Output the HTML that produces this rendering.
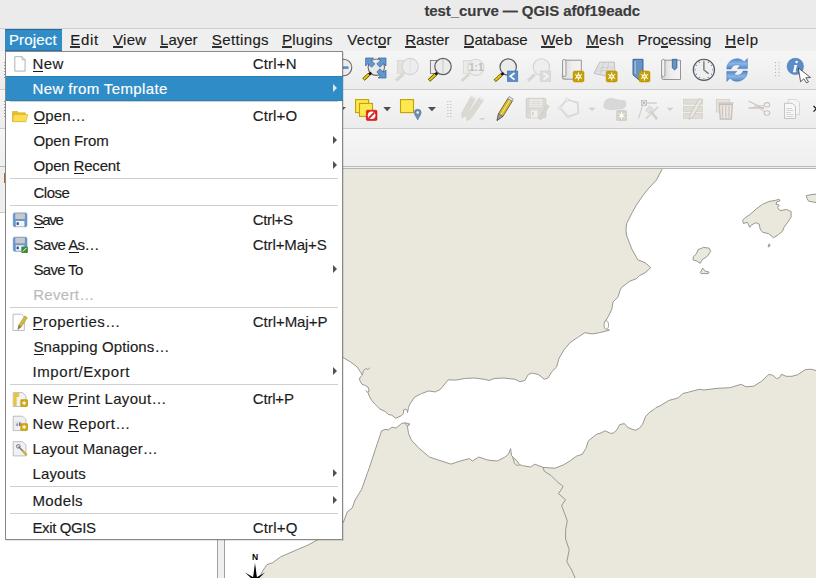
<!DOCTYPE html><html><head><meta charset="utf-8"><style>
*{margin:0;padding:0;box-sizing:border-box}
html,body{width:816px;height:578px;overflow:hidden;background:#efefef;font-family:"Liberation Sans",sans-serif;position:relative}
div,span,svg{position:absolute}
.tx{-webkit-text-stroke:0.15px currentColor;white-space:nowrap;font-size:15px;line-height:15px;color:#1c1c1c}
</style></head><body><div style="left:0px;top:0px;width:816px;height:28px;background:#ebebeb;"></div>
<div style="left:0px;top:28px;width:816px;height:1px;background:#cfcfcf;"></div>
<div style="left:0px;top:29px;width:816px;height:22px;background:#efefef;"></div>
<div style="left:5px;top:29px;width:57px;height:22px;background:#308cc6;border-top:1px solid #2769a0;border-bottom:1px solid #2a72a8"></div>
<div style="left:0px;top:51px;width:816px;height:38px;background:linear-gradient(#f6f6f6,#ececec);"></div>
<div style="left:0px;top:89px;width:816px;height:1px;background:#cdcdcd;"></div>
<div style="left:0px;top:90px;width:816px;height:38px;background:linear-gradient(#f6f6f6,#ececec);"></div>
<div style="left:0px;top:128px;width:816px;height:1px;background:#cdcdcd;"></div>
<div style="left:0px;top:129px;width:816px;height:37px;background:linear-gradient(#f6f6f6,#efefef);"></div>
<div style="left:0px;top:166px;width:816px;height:1px;background:#b9b9b9;"></div>
<div style="left:0px;top:167px;width:816px;height:1px;background:#f0f0f0;"></div>
<div style="left:225px;top:168px;width:591px;height:1px;background:#b5b5b5;"></div>
<svg style="left:0;top:0" width="816" height="168" viewBox="0 0 816 168">
<defs>
 <linearGradient id="gpaper" x1="0" x2="1"><stop offset="0" stop-color="#d4d4d4"/><stop offset="0.5" stop-color="#eeeeee"/><stop offset="1" stop-color="#f4f4f4"/></linearGradient>
 <linearGradient id="gblue" x1="0" x2="1"><stop offset="0" stop-color="#8fb4dd"/><stop offset="1" stop-color="#5f8fc8"/></linearGradient>
 <g id="badge"><rect x="0" y="0" width="11" height="11" rx="1.8" fill="#c6a000" stroke="#b08f00" stroke-width="0.5"/><g stroke="#fff" stroke-width="1"><line x1="5.5" y1="1.4" x2="5.5" y2="9.6"/><line x1="1.9" y1="3.4" x2="9.1" y2="7.6"/><line x1="1.9" y1="7.6" x2="9.1" y2="3.4"/></g><circle cx="5.5" cy="5.5" r="2.3" fill="#fff"/><circle cx="5.5" cy="5.5" r="1.1" fill="#d8b420"/></g>
</defs>
<!-- left strip details -->
<g fill="#9a9a9a"><rect x="4" y="62" width="1" height="1"/><rect x="4" y="65" width="1" height="1"/><rect x="4" y="68" width="1" height="1"/><rect x="4" y="71" width="1" height="1"/><rect x="4" y="74" width="1" height="1"/><rect x="4" y="77" width="1" height="1"/><rect x="4" y="101" width="1" height="1"/><rect x="4" y="104" width="1" height="1"/><rect x="4" y="107" width="1" height="1"/><rect x="4" y="110" width="1" height="1"/><rect x="4" y="113" width="1" height="1"/><rect x="4" y="116" width="1" height="1"/></g>

<!-- ===== toolbar 1 ===== -->
<!-- zoom out (partial) -->
<circle cx="343.5" cy="67.5" r="8.3" fill="#ececec" stroke="#6a6a6a" stroke-width="1.1"/>
<rect x="338" y="66.3" width="10.5" height="2.6" fill="#5a8cc4"/>
<!-- zoom full -->
<g>
 <circle cx="376.3" cy="67.2" r="8.2" fill="#e9e9e9" stroke="#6a6a6a" stroke-width="1.1"/>
 <line x1="363.5" y1="79.5" x2="369.5" y2="73.8" stroke="#3b3b00" stroke-width="3.2"/>
 <line x1="363.8" y1="79.2" x2="369" y2="74.3" stroke="#f2c800" stroke-width="2"/>
 <circle cx="370.2" cy="73.4" r="1.5" fill="#111"/>
 <path d="M0,0 H8 L5.6,2.4 L9.2,6 L6,9.2 L2.4,5.6 L0,8 Z" transform="translate(365.6,58)" fill="#6597cf" stroke="#34649c" stroke-width="0.7" stroke-linejoin="round"/>
 <path d="M0,0 H8 L5.6,2.4 L9.2,6 L6,9.2 L2.4,5.6 L0,8 Z" transform="translate(386,58) scale(-1,1)" fill="#6597cf" stroke="#34649c" stroke-width="0.7" stroke-linejoin="round"/>
 <path d="M0,0 H8 L5.6,2.4 L9.2,6 L6,9.2 L2.4,5.6 L0,8 Z" transform="translate(386,78) scale(-1,-1)" fill="#6597cf" stroke="#34649c" stroke-width="0.7" stroke-linejoin="round"/>
</g>
<!-- zoom to selection (disabled) -->
<g opacity="1">
 <rect x="397.3" y="60.5" width="8" height="13" fill="#e4e2dc" stroke="#d8d6d0" stroke-width="0.8"/>
 <line x1="396" y1="80.5" x2="403.5" y2="74" stroke="#d6d6d2" stroke-width="3"/>
 <circle cx="410.2" cy="66.5" r="8.1" fill="#ededed" stroke="#d4d4d4" stroke-width="1.1"/>
 <line x1="410.2" y1="59" x2="410.2" y2="74" stroke="#e0e0e0" stroke-width="1"/>
</g>
<!-- zoom to layer -->
<g>
 <rect x="430.4" y="60.5" width="8" height="13" fill="#ececec" stroke="#7a7a7a" stroke-width="0.9"/>
 <line x1="429" y1="80.5" x2="436" y2="74" stroke="#3b3b00" stroke-width="3.2"/>
 <line x1="429.3" y1="80.2" x2="435.5" y2="74.5" stroke="#f2c800" stroke-width="2"/>
 <circle cx="436.5" cy="73.4" r="1.5" fill="#111"/>
 <circle cx="443" cy="66.5" r="8.2" fill="#ebebeb" stroke="#5e5e5e" stroke-width="1.2"/>
 <line x1="443" y1="59" x2="443" y2="74" stroke="#c9c9c9" stroke-width="1"/>
</g>
<!-- zoom native 1:1 (disabled) -->
<g>
 <rect x="463.3" y="60.5" width="8" height="13" fill="#eceae4" stroke="#d8d6d0" stroke-width="0.8"/>
 <line x1="461.5" y1="81" x2="469" y2="74.3" stroke="#d6d6d2" stroke-width="3"/>
 <circle cx="475.8" cy="67.3" r="8.1" fill="#eeeeee" stroke="#d4d4d4" stroke-width="1.1"/>
 <text x="476.3" y="71.2" font-family="Liberation Sans" font-weight="bold" font-size="10" text-anchor="middle" fill="#bcbcbc">1:1</text>
</g>
<!-- zoom last -->
<g>
 <circle cx="508.2" cy="67" r="8.2" fill="#ebebeb" stroke="#5e5e5e" stroke-width="1.2"/>
 <line x1="494.8" y1="80.8" x2="501.8" y2="74.3" stroke="#3b3b00" stroke-width="3.2"/>
 <line x1="495.1" y1="80.5" x2="501.3" y2="74.8" stroke="#f2c800" stroke-width="2"/>
 <circle cx="502.5" cy="73.8" r="1.5" fill="#111"/>
 <rect x="507.3" y="71" width="10.5" height="10.5" fill="#5b8dc6" stroke="#3f6ea8" stroke-width="0.6"/>
 <path d="M514.5,73 l-4.3,3.3 l4.3,3.3" fill="none" stroke="#fff" stroke-width="1.7"/>
</g>
<!-- zoom next (disabled) -->
<g>
 <circle cx="541.4" cy="67" r="8.2" fill="#eeeeee" stroke="#d2d2d2" stroke-width="1.1"/>
 <line x1="527.8" y1="80.8" x2="535" y2="74.3" stroke="#d6d6d2" stroke-width="3"/>
 <rect x="540.2" y="71" width="10.5" height="10.5" fill="#dcdcdc" stroke="#d0d0d0" stroke-width="0.6"/>
 <path d="M543.5,73 l4.3,3.3 l-4.3,3.3" fill="none" stroke="#f5f5f5" stroke-width="1.7"/>
</g>
<!-- new spatial bookmark (scroll + badge) -->
<g>
 <path d="M563,60.2 h18.3 v19 h-17.2 a1.8,1.8 0 0 1 -1.8,-1.8 z" fill="url(#gpaper)" stroke="#8a8a8a" stroke-width="0.9"/>
 <rect x="562.6" y="59.5" width="3.3" height="17" rx="1.5" fill="#f2f2f2" stroke="#8a8a8a" stroke-width="0.8"/>
 <use href="#badge" x="573" y="71"/>
</g>
<!-- 3D map (grid + badge) -->
<g>
 <path d="M594,73.4 L599.7,62.1 L614.3,62.1 L615,73 L606,76 Z" fill="#e2e2e2" stroke="#b5b5b5" stroke-width="0.8"/>
 <g stroke="#c4c4c4" stroke-width="0.6" fill="none"><path d="M597,68 L614,67"/><path d="M604,62 L600,74"/><path d="M609,62 L606,75"/><path d="M596,71 L614,70"/></g>
 <use href="#badge" x="606.2" y="71"/>
</g>
<!-- bookmark blue + badge -->
<g>
 <path d="M633,59.3 h10 v20.6 l-4,0 l-6,-5 z" fill="#6693c8" stroke="#345a8a" stroke-width="0.9"/>
 <rect x="634.5" y="61" width="1.2" height="13" fill="#a9c6e8"/>
 <use href="#badge" x="639" y="71"/>
</g>
<!-- show bookmarks (scroll with blue tab) -->
<g>
 <path d="M662,60.2 h18.5 v19.3 h-17 a1.8,1.8 0 0 1 -1.8,-1.8 z" fill="url(#gpaper)" stroke="#8a8a8a" stroke-width="0.9"/>
 <rect x="661.6" y="59.5" width="3.3" height="17" rx="1.5" fill="#f2f2f2" stroke="#8a8a8a" stroke-width="0.8"/>
 <path d="M672.3,59.3 h4.6 v8.6 l-2.3,2 l-2.3,-2 z" fill="#6693c8" stroke="#345a8a" stroke-width="0.8"/>
</g>
<!-- clock -->
<g>
 <circle cx="703.9" cy="69.8" r="10.6" fill="#efefef" stroke="#555555" stroke-width="1.15"/>
 <g fill="#5b8fd6">
  <circle cx="703.9" cy="61" r="0.7"/><circle cx="708.3" cy="62.2" r="0.7"/><circle cx="711.5" cy="65.4" r="0.7"/><circle cx="712.7" cy="69.8" r="0.7"/><circle cx="711.5" cy="74.2" r="0.7"/><circle cx="708.3" cy="77.4" r="0.7"/><circle cx="703.9" cy="78.6" r="0.7"/><circle cx="699.5" cy="77.4" r="0.7"/><circle cx="696.3" cy="74.2" r="0.7"/><circle cx="695.1" cy="69.8" r="0.7"/><circle cx="696.3" cy="65.4" r="0.7"/><circle cx="699.5" cy="62.2" r="0.7"/>
 </g>
 <path d="M703.9,61.8 V70 L708.6,73.6" fill="none" stroke="#777" stroke-width="1.4"/>
</g>
<!-- refresh -->
<defs><linearGradient id="grf" x1="0" y1="0" x2="0" y2="1"><stop offset="0" stop-color="#4f88c9"/><stop offset="0.5" stop-color="#8db6e6"/><stop offset="1" stop-color="#4a82c4"/></linearGradient></defs>
<g fill="url(#grf)" stroke="#3f74b4" stroke-width="0.5">
 <path d="M726.8,69 A10.2,10.2 0 0 1 744.2,61.8 L747.4,58.6 V68.6 H737.4 L740.3,65.7 A6.2,6.2 0 0 0 731,69 Z"/>
 <path d="M726.8,69 A10.2,10.2 0 0 1 744.2,61.8 L747.4,58.6 V68.6 H737.4 L740.3,65.7 A6.2,6.2 0 0 0 731,69 Z" transform="rotate(180 737.1 70)"/>
</g>
<!-- handle dots tb1 -->
<g fill="#a9a9a9">
 <rect x="775" y="62" width="1" height="1"/><rect x="778.5" y="62" width="1" height="1"/>
 <rect x="775" y="65.3" width="1" height="1"/><rect x="778.5" y="65.3" width="1" height="1"/>
 <rect x="775" y="68.6" width="1" height="1"/><rect x="778.5" y="68.6" width="1" height="1"/>
 <rect x="775" y="71.9" width="1" height="1"/><rect x="778.5" y="71.9" width="1" height="1"/>
 <rect x="775" y="75.2" width="1" height="1"/><rect x="778.5" y="75.2" width="1" height="1"/>
</g>
<!-- identify -->
<g>
 <circle cx="795.3" cy="66.4" r="8.2" fill="#5b8cc8" stroke="#4a78b0" stroke-width="0.6"/>
 <circle cx="796.6" cy="62" r="1.2" fill="#fff"/>
 <path d="M794.5,65 h2.6 l-1.6,6.3 h1 l-0.3,1 h-3.3 l1.5,-6.3 h-0.8 z" fill="#fff"/>
 <path d="M798.3,68 L810.5,77.5 L805.8,77.8 L808.5,81.8 L806.5,82.8 L803.8,78.8 L800.6,81.7 Z" fill="#fff" stroke="#333" stroke-width="0.8" stroke-linejoin="round"/>
</g>

<!-- ===== toolbar 2 ===== -->
<!-- partial arrow left -->
<path d="M338,107 h8 l-4,4 z" fill="#555"/>
<!-- deselect -->
<g>
 <rect x="355.6" y="99.6" width="13" height="13" fill="#fce94f" stroke="#c4a000" stroke-width="1.1"/>
 <rect x="359.5" y="103.4" width="13" height="13" fill="#fce94f" stroke="#c4a000" stroke-width="1.1"/>
 <rect x="366.3" y="110.2" width="10.7" height="10.3" rx="1.2" fill="#dd2222" stroke="#cc0000" stroke-width="0.5"/>
 <circle cx="371.6" cy="115.3" r="3.8" fill="#fff"/>
 <line x1="369" y1="118" x2="374.3" y2="112.6" stroke="#dd2222" stroke-width="1.8"/>
</g>
<path d="M383.3,107 h7.7 l-3.85,4.2 z" fill="#4e4e4e"/>
<!-- select by location -->
<g>
 <rect x="400.5" y="99.6" width="13" height="13" fill="#fce94f" stroke="#c4a000" stroke-width="1.1"/>
 <path d="M417.7,109.2 a3.4,3.4 0 0 1 3.4,3.4 c0,2.2 -2.2,4.5 -3.4,7.3 c-1.2,-2.8 -3.4,-5.1 -3.4,-7.3 a3.4,3.4 0 0 1 3.4,-3.4 z" fill="#6a8db0" stroke="#4f7397" stroke-width="0.6"/>
 <circle cx="417.7" cy="112.5" r="1.2" fill="#fff"/>
</g>
<path d="M427.9,107 h8.1 l-4.05,4.3 z" fill="#4e4e4e"/>
<!-- handle dots tb2 -->
<g fill="#acacac">
 <rect x="447.4" y="101" width="1" height="1"/><rect x="450.3" y="101" width="1" height="1"/>
 <rect x="447.4" y="104" width="1" height="1"/><rect x="450.3" y="104" width="1" height="1"/>
 <rect x="447.4" y="107" width="1" height="1"/><rect x="450.3" y="107" width="1" height="1"/>
 <rect x="447.4" y="110" width="1" height="1"/><rect x="450.3" y="110" width="1" height="1"/>
 <rect x="447.4" y="113" width="1" height="1"/><rect x="450.3" y="113" width="1" height="1"/>
 <rect x="447.4" y="116" width="1" height="1"/><rect x="450.3" y="116" width="1" height="1"/>
</g>
<!-- current edits (disabled pencils) -->
<path d="M462,118 L466.1,115.7 L475.2,99.2 L470.8,96.8 L461.7,113.3 Z" fill="#dcd9d3" stroke="#d2cfca" stroke-width="0.6"/>
<path d="M466.5,120.5 L470.9,118.6 L483.1,100.9 L478.9,98.1 L466.7,115.8 Z" fill="#dcd9d3" stroke="#d2cfca" stroke-width="0.6"/>
<path d="M470.8,96.8 L475.2,99.2 L476,97.8 L471.6,95.4 Z M478.9,98.1 L483.1,100.9 L484,99.5 L479.8,96.7 Z" fill="#f2f2f2" stroke="#d6d6d6" stroke-width="0.5"/>
<path d="M479.3,118 h5.7 l-2.85,2.7 z" fill="#d2d2d2"/>
<!-- toggle editing pencil -->
<g>
 <path d="M497,120.5 L498.6,113.5 L507.8,98.5 L512.2,101.3 L503,116.3 Z" fill="#d9bc2a" stroke="#5a5030" stroke-width="0.8" stroke-linejoin="round"/>
 <path d="M497,120.5 L498.6,113.5 L503,116.3 Z" fill="#9a9a9a" stroke="#4a4a4a" stroke-width="0.6"/>
 <path d="M507.8,98.5 L509.2,96.5 L513.3,99.2 L512.2,101.3 Z" fill="#e6e6e6" stroke="#666" stroke-width="0.6"/>
 <line x1="500.8" y1="114.8" x2="510" y2="99.9" stroke="#f3e48a" stroke-width="1"/>
</g>
<!-- save edits (disabled) -->
<g>
 <rect x="526.3" y="98.3" width="19.5" height="19.5" rx="1.5" fill="#dcdad6" stroke="#cdcbc7" stroke-width="0.9"/>
 <rect x="530" y="99.3" width="12" height="7.5" fill="#eeeeea"/>
 <g stroke="#d0cecb" stroke-width="0.7"><line x1="531" y1="101.3" x2="541" y2="101.3"/><line x1="531" y1="103.3" x2="541" y2="103.3"/><line x1="531" y1="105.3" x2="541" y2="105.3"/></g>
 <rect x="531" y="110.5" width="6.5" height="7" fill="#f0f0ee"/><rect x="532.3" y="112" width="1.2" height="3.5" fill="#c8c8c8"/>
 <line x1="539.5" y1="119.5" x2="548" y2="105" stroke="#d8d2cc" stroke-width="3.8"/>
</g>
<!-- add polygon (disabled) -->
<path d="M567,99.6 L577.8,102.8 L578.3,113.1 L568,117 L559.9,107.7 Z" fill="none" stroke="#dadada" stroke-width="2" stroke-linejoin="round"/><g fill="#f2f2f2" stroke="#d0d0d0" stroke-width="0.7"><circle cx="567" cy="99.6" r="1.6"/><circle cx="559.9" cy="107.7" r="1.6"/><circle cx="568" cy="117" r="1.3"/></g>
<path d="M588.6,107.7 h6.9 l-3.45,3.4 z" fill="#d0d0d0"/>
<!-- digitize shape (disabled) -->
<g>
 <path d="M606,100 c4,-3 9,-1 12,0 c4,1 8,-1 8,4 c0,4 -3,5 -6,5 c-3,0 -6,1 -10,0.5 c-4,-0.5 -7,-1 -6,-5 c0.3,-2 1,-3.5 2,-4.5 z" fill="#d8d8d8" stroke="#d0d0d0" stroke-width="0.6"/>
 <rect x="616.2" y="110.1" width="10.8" height="10.8" rx="1.5" fill="#d4d0c6"/>
 <g stroke="#fff" stroke-width="1"><line x1="621.6" y1="111.8" x2="621.6" y2="119.2"/><line x1="618.5" y1="113.6" x2="624.7" y2="117.4"/><line x1="618.5" y1="117.4" x2="624.7" y2="113.6"/></g>
 <circle cx="621.6" cy="115.5" r="1.6" fill="#fff"/>
</g>
<!-- vertex tool (disabled) -->
<g>
 <rect x="641" y="100" width="6" height="5.8" fill="#bdbdbd"/>
 <circle cx="644" cy="102.9" r="1.9" fill="none" stroke="#f2f2f2" stroke-width="0.9"/>
 <line x1="647" y1="103" x2="656.8" y2="103" stroke="#cdcdcd" stroke-width="1.4"/>
 <line x1="642.3" y1="106" x2="638.5" y2="118.5" stroke="#c4c4c4" stroke-width="0.9"/>
 <line x1="645.8" y1="118.8" x2="658.3" y2="106.6" stroke="#d9d6d0" stroke-width="1.8"/>
 <line x1="649.5" y1="109.5" x2="657" y2="119.2" stroke="#d3cfc8" stroke-width="2.4"/>
 <path d="M645.5,110.5 L649.6,105.8 L653.3,108.8 L649.4,113.3 Z" fill="#e2e0dc" stroke="#cfccc6" stroke-width="0.6"/>
</g>
<path d="M666.7,107.7 h6.8 l-3.4,3.3 z" fill="#d0d0d0"/>
<!-- modify attributes (disabled) -->
<g fill="#e0ded4" stroke="#d2d0c7" stroke-width="0.8">
 <rect x="683.4" y="99.2" width="19" height="5"/>
 <rect x="683.4" y="106.4" width="19" height="5"/>
 <rect x="683.4" y="113.3" width="19" height="5"/>
</g>
<path d="M689.3,119.5 L690,114.5 L699.3,98.6 L702.6,100.5 L693.3,116.4 Z" fill="#e9e7e3" stroke="#c9c5c0" stroke-width="0.9" stroke-linejoin="round"/>
<!-- delete selected (disabled) -->
<g>
 <rect x="716.3" y="99.5" width="13.3" height="12.5" fill="#e6e3dc" stroke="#d2cfc8" stroke-width="0.8"/>
 <rect x="718" y="102.2" width="15.5" height="1.6" fill="#d2ccc8"/>
 <path d="M719.3,104.5 h13 l-1,14.5 h-11 z" fill="#ebe8e4" stroke="#c7bdb9" stroke-width="1.3"/>
 <g stroke="#cdc4c0" stroke-width="1.2"><line x1="722.5" y1="106" x2="722.5" y2="117.5"/><line x1="725.8" y1="106" x2="725.8" y2="117.5"/><line x1="729" y1="106" x2="729" y2="117.5"/></g>
</g>
<!-- cut (disabled) -->
<g fill="none" stroke="#cbc3c0">
 <path d="M748.6,101 L764,108.8" stroke-width="1.2"/>
 <path d="M748.6,108 L764,107.8" stroke-width="1.6"/>
 <ellipse cx="767" cy="104.8" rx="2.8" ry="2.2" stroke-width="1.1"/>
 <ellipse cx="767" cy="113" rx="2.8" ry="2.2" stroke-width="1.1"/>
 <path d="M754,106 L764.6,105.8 M757,106.5 L764.4,111.5" stroke-width="0.9"/>
</g>
<!-- copy (disabled) -->
<g>
 <path d="M788.3,99.5 h8 l3.2,3.2 v12 h-11.2 z" fill="#f5f5f5" stroke="#d0d0d0" stroke-width="0.8"/>
 <path d="M784.5,103.3 h7.8 l3.2,3.2 v12 h-11 z" fill="#f8f8f8" stroke="#bdbdbd" stroke-width="0.9"/>
 <g stroke="#c5c5c5" stroke-width="0.7"><line x1="786.3" y1="108.5" x2="792" y2="108.5"/><line x1="786.3" y1="110.5" x2="793.5" y2="110.5"/><line x1="786.3" y1="112.5" x2="791" y2="112.5"/><line x1="786.3" y1="114.5" x2="793.5" y2="114.5"/><line x1="786.3" y1="116.5" x2="793.5" y2="116.5"/></g>
</g>
<!-- extension chevron -->
<path d="M813.5,106 l2.8,2.8 l-2.8,2.8" fill="none" stroke="#222" stroke-width="1.3"/>
</svg>

<div style="left:0px;top:167px;width:218px;height:46px;background:#eeeeee;"></div>
<div style="left:0px;top:212px;width:218px;height:1px;background:#c8c8c8;"></div>
<div style="left:0px;top:213px;width:217px;height:365px;background:#ffffff;"></div>
<div style="left:3.5px;top:173px;width:1.5px;height:10px;background:#b5651d;"></div>
<div style="left:217px;top:168px;width:8px;height:410px;background:#efefef;border-left:1px solid #a0a0a0;border-right:1px solid #a0a0a0"></div>
<svg style="left:225px;top:169px" width="591" height="409" viewBox="225 169 591 409"><rect x="225" y="160" width="591" height="420" fill="#ffffff"/>
<polygon points="225.0,160.0 665.0,160.0 661.7,170.0 656.5,179.9 648.8,188.2 643.0,195.4 636.4,205.0 632.2,212.5 626.5,223.9 626.0,230.0 626.5,235.0 629.2,242.4 632.1,249.6 637.8,259.8 645.1,262.7 650.8,267.6 645.1,272.8 639.3,275.7 636.4,278.6 629.2,281.5 626.5,283.7 621.9,287.2 620.3,289.8 617.9,297.2 613.0,302.0 611.8,309.4 608.1,316.8 604.4,322.9 605.6,327.8 609.3,330.2 599.5,332.7 592.2,333.9 584.8,332.7 577.5,337.6 570.1,342.5 564.0,349.9 559.0,358.4 556.6,367.0 551.7,371.9 548.0,378.0 544.4,379.3 538.2,374.4 532.1,373.1 528.4,374.4 524.8,380.5 519.9,381.7 515.0,379.3 503.9,378.0 494.1,378.5 489.2,380.5 484.3,379.3 474.5,378.0 464.7,378.5 456.1,380.1 448.3,379.8 444.0,385.0 440.5,389.3 435.3,391.9 428.4,391.0 421.5,393.6 414.6,397.1 412.7,400.0 409.9,404.2 408.5,407.6 407.5,412.5 407.1,410.4 405.8,409.3 403.7,409.7 403.3,413.8 401.6,415.6 395.7,418.3 391.9,415.2 388.5,414.5 385.0,411.4 380.0,409.2 374.8,404.0 371.4,400.0 369.0,395.5 368.0,392.4 369.2,390.7 368.0,387.2 365.4,385.5 361.9,384.2 359.7,380.3 359.7,377.7 362.3,375.1 360.2,371.6 357.1,366.9 350.7,362.1 342.9,357.4 225.0,340.0" fill="#eae7dd" stroke="#8e8d87" stroke-width="0.9" stroke-linejoin="round"/>
<polygon points="225.0,600.0 255.0,590.0 259.0,578.0 262.9,570.6 266.9,564.7 272.7,562.7 280.6,556.9 296.3,550.0 308.0,545.1 316.9,540.2 330.0,533.0 343.3,522.5 347.3,511.8 352.3,507.9 355.1,500.0 361.6,489.4 369.3,467.8 375.4,449.3 381.6,430.8 385.0,429.4 388.5,429.8 391.9,427.3 396.1,428.0 401.6,423.5 405.1,422.8 409.6,423.9 407.5,426.6 408.5,433.3 411.3,440.0 418.6,447.8 429.4,457.0 438.6,460.1 450.9,464.1 460.2,461.0 469.4,458.6 472.5,461.0 478.7,457.0 487.9,460.1 497.2,461.0 504.8,457.2 508.4,454.3 510.6,448.6 511.5,455.3 513.4,457.8 516.4,460.2 519.5,464.5 522.6,465.7 530.5,467.0 534.8,464.2 543.0,467.4 554.9,468.2 563.2,465.0 569.2,461.5 576.4,456.2 582.3,454.3 585.9,448.4 588.4,440.8 597.1,433.9 600.0,433.4 605.2,430.8 610.4,433.4 613.5,432.9 616.6,430.3 619.7,424.6 624.4,423.6 627.5,427.2 631.1,428.8 635.3,430.3 639.4,428.2 642.5,424.6 645.6,416.3 649.8,412.2 654.5,409.0 656.0,407.5 660.0,405.9 668.6,400.5 678.2,397.9 682.9,393.5 688.7,392.1 699.2,389.3 704.0,390.0 717.4,388.3 729.8,387.7 741.3,384.3 746.0,386.8 753.7,386.2 761.3,381.4 769.0,374.3 772.8,375.3 776.6,378.5 779.5,377.6 781.4,374.3 786.2,376.3 791.9,376.3 797.7,374.7 805.3,369.6 811.0,369.2 816.0,370.5 817.0,370.5 830.0,600.0" fill="#eae7dd" stroke="#8e8d87" stroke-width="0.9" stroke-linejoin="round"/>
<polygon points="742.6,220.3 745.0,217.9 749.7,214.7 756.1,209.1 762.5,204.3 768.8,201.5 775.2,200.4 779.2,199.2 780.0,200.8 776.8,201.9 776.0,204.3 779.2,205.1 777.6,207.5 780.0,210.7 786.4,209.4 791.1,211.5 791.1,217.1 788.0,221.9 784.0,227.4 782.4,231.4 778.4,234.6 773.6,237.8 768.8,233.8 762.5,232.2 760.1,229.0 759.3,224.3 756.1,222.7 751.3,225.0 749.7,227.4 747.3,222.3 743.4,223.5" fill="#eae7dd" stroke="#8e8d87" stroke-width="0.9" stroke-linejoin="round"/>
<polygon points="806.3,195.6 812.0,194.5 817.0,194.0 817.0,202.7 808.7,201.2 807.1,198.8" fill="#eae7dd" stroke="#8e8d87" stroke-width="0.9" stroke-linejoin="round"/>
<polygon points="693.2,256.9 696.4,253.7 698.0,249.7 703.5,247.4 709.1,248.1 710.7,251.3 707.5,256.1 701.9,260.1 700.3,263.3 696.4,260.9 693.2,260.1" fill="#eae7dd" stroke="#8e8d87" stroke-width="0.9" stroke-linejoin="round"/>
<polygon points="700.3,272.8 702.7,268.1 705.1,271.2 709.1,272.0 708.3,273.6 701.1,273.6" fill="#eae7dd" stroke="#8e8d87" stroke-width="0.9" stroke-linejoin="round"/>
<polygon points="768.0,246.5 769.2,243.8 770.2,245.0 769.0,247.0" fill="#eae7dd" stroke="#8e8d87" stroke-width="0.9" stroke-linejoin="round"/>
<polyline points="543.0,467.4 544.2,471.0 551.3,475.8 557.3,481.8 563.2,486.5 558.5,493.7 565.6,499.7 561.6,505.6 564.4,512.8 567.3,521.1 565.6,529.5 565.6,539.0 569.2,549.8 566.8,561.7 571.6,570.0 575.2,578.0" fill="none" stroke="#8e8d87" stroke-width="0.9"/>
<polyline points="362.3,375.1 363.6,370.3 365.8,368.6 368.0,369.5 370.1,367.7" fill="none" stroke="#8e8d87" stroke-width="0.8"/>
<polyline points="365.8,390.2 367.1,392.4 369.2,390.7" fill="none" stroke="#8e8d87" stroke-width="0.8"/>
<polyline points="405.1,422.8 407.5,426.6 409.6,423.9" fill="none" stroke="#8e8d87" stroke-width="0.8"/>
<polyline points="512.5,456.5 513.6,460.0 514.3,463.3 516.4,465.1 519.5,465.3" fill="none" stroke="#8e8d87" stroke-width="0.8"/>
<ellipse cx="606.3" cy="325" rx="2.2" ry="4.2" fill="#ffffff" stroke="#8e8d87" stroke-width="0.8"/>
<text x="255.1" y="560.3" font-family="Liberation Sans" font-weight="bold" font-size="8.5" text-anchor="middle" fill="#000">N</text>
<polygon points="255,563 257,578 253,578" fill="#000"/>
<polygon points="245,572.5 255.5,578.5 252,579" fill="#000"/><polygon points="265,572.5 254.5,578.5 258,579" fill="#000"/></svg>
<div style="left:5px;top:51px;width:338px;height:489px;background:#ffffff;border:1px solid #888888;box-shadow:1px 1px 0 rgba(0,0,0,0.10)"></div>
<svg style="left:0;top:0" width="343" height="540" viewBox="0 0 343 540">
<defs>
 <g id="mbadge"><rect x="0" y="0" width="7.5" height="7.5" rx="1.2" fill="#c6a000"/><g stroke="#fff" stroke-width="0.8"><line x1="3.75" y1="1.2" x2="3.75" y2="6.3"/><line x1="1.5" y1="2.5" x2="6" y2="5"/><line x1="1.5" y1="5" x2="6" y2="2.5"/></g><circle cx="3.75" cy="3.75" r="1.1" fill="#fff"/></g>
</defs>
<!-- new page -->
<path d="M14.8,56.7 h7.3 l3,3 v11.4 h-10.3 z" fill="#fff" stroke="#a9a9a9" stroke-width="0.9" stroke-linejoin="round"/>
<path d="M22.1,56.7 v3 h3" fill="#e6e6e6" stroke="#a9a9a9" stroke-width="0.8"/>
<!-- folder -->
<path d="M12.5,111.5 h5 l1.2,1.3 h6.5 v8.7 h-12.7 z" fill="#e8c02c" stroke="#d2a91a" stroke-width="0.6"/>
<path d="M13.8,114.5 h14 l-1.8,7.2 h-13.5 z" fill="#fbdc55" stroke="#d8b028" stroke-width="0.6"/>
<!-- save -->
<g>
 <rect x="13.3" y="212.9" width="13.6" height="13.8" rx="1.5" fill="#6a98cc" stroke="#4f7fb8" stroke-width="0.6"/>
 <rect x="15.3" y="213.4" width="9.6" height="5.6" fill="#c9c9c9"/>
 <rect x="15.8" y="221" width="8.6" height="5.5" fill="#f4f4f4"/>
 <rect x="16.6" y="222.3" width="2.2" height="2.6" fill="#2b4f85"/>
</g>
<g>
 <rect x="13.3" y="237.2" width="13.6" height="14" rx="1.5" fill="#6a98cc" stroke="#4f7fb8" stroke-width="0.6"/>
 <rect x="15.3" y="237.7" width="9.6" height="5.6" fill="#c9c9c9"/>
 <rect x="15.8" y="245.3" width="8.6" height="5.5" fill="#f4f4f4"/>
 <rect x="16.6" y="246.6" width="2.2" height="2.6" fill="#2b4f85"/>
 <rect x="21.3" y="246.6" width="6.6" height="6.3" rx="1" fill="#3f8a3a"/>
 <line x1="22.8" y1="251.5" x2="26.5" y2="247.8" stroke="#fff" stroke-width="1"/>
</g>
<!-- properties -->
<g>
 <path d="M13,314.2 h8.5 l2.8,2.8 v13.5 h-11.3 z" fill="#fff" stroke="#b5b5b5" stroke-width="0.9"/>
 <path d="M17.8,329.6 L18.8,325 L24.8,316 L27.3,317.8 L21.3,326.8 Z" fill="#d9bc2a" stroke="#8a7a30" stroke-width="0.5"/>
 <path d="M17.8,329.6 L18.8,325 L21.3,326.8 Z" fill="#777"/>
</g>
<!-- new print layout -->
<g>
 <path d="M13.2,392.6 h9.5 l3.2,3.2 v10.7 h-12.7 z" fill="#f3f3f3" stroke="#b0b0b0" stroke-width="0.8"/>
 <path d="M13.6,393 h5.5 v4 h-2.5 v9 h-3 z" fill="#e9c43a"/>
 <use href="#mbadge" x="20.4" y="399.3"/>
</g>
<!-- new report -->
<g>
 <path d="M13.2,416.2 h9.5 l3.2,3.2 v11.2 h-12.7 z" fill="#eef0f4" stroke="#b0b0b0" stroke-width="0.8"/>
 <rect x="15" y="421" width="7" height="5" fill="#dde6f2"/>
 <rect x="16.5" y="423.5" width="1.2" height="2.5" fill="#4a7cc2"/><rect x="19" y="422.5" width="1.5" height="3.5" fill="#d04040"/>
 <use href="#mbadge" x="20.4" y="423.3"/>
</g>
<!-- layout manager -->
<g>
 <path d="M13.2,441.7 h9.5 l3.2,3.2 v11 h-12.7 z" fill="#eef2f8" stroke="#b0b0b0" stroke-width="0.8"/>
 <line x1="18.5" y1="446.5" x2="26.5" y2="455" stroke="#777" stroke-width="1.6"/>
 <line x1="22.5" y1="450.8" x2="26.8" y2="455.3" stroke="#d4b020" stroke-width="2"/>
 <circle cx="18.3" cy="446.3" r="1.8" fill="none" stroke="#777" stroke-width="1"/>
</g>
</svg>

<div style="left:6px;top:76px;width:337px;height:25px;background:#308cc6;border-top:1px solid #2b80b8;border-bottom:1px solid #2b80b8"></div>
<div style="left:333px;top:84px;width:0;height:0;border-left:4px solid #d9e8f3;border-top:4px solid transparent;border-bottom:4px solid transparent"></div>
<div style="left:10px;top:101px;width:328px;height:1px;background:#cfcfcf;"></div>
<div style="left:333px;top:136px;width:0;height:0;border-left:4px solid #4d5257;border-top:4px solid transparent;border-bottom:4px solid transparent"></div>
<div style="left:333px;top:161px;width:0;height:0;border-left:4px solid #4d5257;border-top:4px solid transparent;border-bottom:4px solid transparent"></div>
<div style="left:10px;top:178px;width:328px;height:1px;background:#cfcfcf;"></div>
<div style="left:10px;top:205px;width:328px;height:1px;background:#cfcfcf;"></div>
<div style="left:333px;top:265px;width:0;height:0;border-left:4px solid #4d5257;border-top:4px solid transparent;border-bottom:4px solid transparent"></div>
<div style="left:10px;top:307px;width:328px;height:1px;background:#cfcfcf;"></div>
<div style="left:333px;top:367px;width:0;height:0;border-left:4px solid #4d5257;border-top:4px solid transparent;border-bottom:4px solid transparent"></div>
<div style="left:10px;top:384px;width:328px;height:1px;background:#cfcfcf;"></div>
<div style="left:333px;top:469px;width:0;height:0;border-left:4px solid #4d5257;border-top:4px solid transparent;border-bottom:4px solid transparent"></div>
<div style="left:10px;top:486px;width:328px;height:1px;background:#cfcfcf;"></div>
<div style="left:333px;top:496px;width:0;height:0;border-left:4px solid #4d5257;border-top:4px solid transparent;border-bottom:4px solid transparent"></div>
<div style="left:10px;top:513px;width:328px;height:1px;background:#cfcfcf;"></div>
<span class="tx" style="left:424.40px;top:3px;color:#3c3c3c;letter-spacing:-0.069px;font-weight:bold;">test_curve — QGIS af0f19eadc</span>
<span class="tx" style="left:8.90px;top:32px;color:#ffffff;letter-spacing:0.180px;">Project</span>
<div style="left:32.78px;top:46px;width:3.33px;height:2px;background:#ffffff;opacity:0.9"></div>
<span class="tx" style="left:70.30px;top:32px;color:#1c1c1c;letter-spacing:0.707px;">Edit</span>
<div style="left:70.30px;top:46px;width:10.00px;height:2px;background:#1c1c1c;opacity:0.9"></div>
<span class="tx" style="left:113.10px;top:32px;color:#1c1c1c;letter-spacing:0.264px;">View</span>
<div style="left:113.10px;top:46px;width:10.00px;height:2px;background:#1c1c1c;opacity:0.9"></div>
<span class="tx" style="left:160.10px;top:32px;color:#1c1c1c;letter-spacing:-0.032px;">Layer</span>
<div style="left:160.10px;top:46px;width:8.34px;height:2px;background:#1c1c1c;opacity:0.9"></div>
<span class="tx" style="left:211.80px;top:32px;color:#1c1c1c;letter-spacing:0.372px;">Settings</span>
<div style="left:211.80px;top:46px;width:10.00px;height:2px;background:#1c1c1c;opacity:0.9"></div>
<span class="tx" style="left:282.10px;top:32px;color:#1c1c1c;letter-spacing:0.217px;">Plugins</span>
<div style="left:282.10px;top:46px;width:10.00px;height:2px;background:#1c1c1c;opacity:0.9"></div>
<span class="tx" style="left:347.30px;top:32px;color:#1c1c1c;letter-spacing:0.354px;">Vector</span>
<div style="left:377.90px;top:46px;width:8.34px;height:2px;background:#1c1c1c;opacity:0.9"></div>
<span class="tx" style="left:405.30px;top:32px;color:#1c1c1c;letter-spacing:-0.057px;">Raster</span>
<div style="left:405.30px;top:46px;width:10.83px;height:2px;background:#1c1c1c;opacity:0.9"></div>
<span class="tx" style="left:463.60px;top:32px;color:#1c1c1c;letter-spacing:-0.038px;">Database</span>
<div style="left:463.60px;top:46px;width:10.83px;height:2px;background:#1c1c1c;opacity:0.9"></div>
<span class="tx" style="left:541.20px;top:32px;color:#1c1c1c;letter-spacing:0.285px;">Web</span>
<div style="left:541.20px;top:46px;width:14.16px;height:2px;background:#1c1c1c;opacity:0.9"></div>
<span class="tx" style="left:586.30px;top:32px;color:#1c1c1c;letter-spacing:0.288px;">Mesh</span>
<div style="left:586.30px;top:46px;width:12.50px;height:2px;background:#1c1c1c;opacity:0.9"></div>
<span class="tx" style="left:637.50px;top:32px;color:#1c1c1c;letter-spacing:-0.029px;">Processing</span>
<div style="left:660.76px;top:46px;width:7.50px;height:2px;background:#1c1c1c;opacity:0.9"></div>
<span class="tx" style="left:725.30px;top:32px;color:#1c1c1c;letter-spacing:0.631px;">Help</span>
<div style="left:725.30px;top:46px;width:10.83px;height:2px;background:#1c1c1c;opacity:0.9"></div>
<span class="tx" style="left:32.50px;top:56px;color:#1c1c1c;letter-spacing:0.463px;">New</span>
<div style="left:32.50px;top:71px;width:10.83px;height:1px;background:#1c1c1c"></div>
<span class="tx" style="left:252.80px;top:56px;color:#1c1c1c;letter-spacing:0.163px;">Ctrl+N</span>
<span class="tx" style="left:32.50px;top:81px;color:#ffffff;letter-spacing:0.365px;">New from Template</span>
<span class="tx" style="left:33.50px;top:108px;color:#1c1c1c;letter-spacing:0.151px;">Open…</span>
<div style="left:33.50px;top:123px;width:11.67px;height:1px;background:#1c1c1c"></div>
<span class="tx" style="left:252.80px;top:108px;color:#1c1c1c;letter-spacing:0.103px;">Ctrl+O</span>
<span class="tx" style="left:33.50px;top:133px;color:#1c1c1c;letter-spacing:-0.070px;">Open From</span>
<span class="tx" style="left:33.50px;top:158px;color:#1c1c1c;letter-spacing:-0.172px;">Open Recent</span>
<div style="left:73.50px;top:173px;width:10.83px;height:1px;background:#1c1c1c"></div>
<span class="tx" style="left:33.50px;top:185px;color:#1c1c1c;letter-spacing:-0.477px;">Close</span>
<span class="tx" style="left:33.50px;top:212px;color:#1c1c1c;letter-spacing:-1.282px;">Save</span>
<div style="left:33.50px;top:227px;width:10.00px;height:1px;background:#1c1c1c"></div>
<span class="tx" style="left:252.80px;top:212px;color:#1c1c1c;letter-spacing:-0.377px;">Ctrl+S</span>
<span class="tx" style="left:33.50px;top:237px;color:#1c1c1c;letter-spacing:-0.580px;">Save As…</span>
<div style="left:68.96px;top:252px;width:10.00px;height:1px;background:#1c1c1c"></div>
<span class="tx" style="left:252.80px;top:237px;color:#1c1c1c;letter-spacing:-0.124px;">Ctrl+Maj+S</span>
<span class="tx" style="left:33.50px;top:262px;color:#1c1c1c;letter-spacing:-0.693px;">Save To</span>
<span class="tx" style="left:33.20px;top:287px;color:#bababa;letter-spacing:0.320px;">Revert…</span>
<span class="tx" style="left:32.50px;top:314px;color:#1c1c1c;letter-spacing:0.444px;">Properties…</span>
<div style="left:32.50px;top:329px;width:10.00px;height:1px;background:#1c1c1c"></div>
<span class="tx" style="left:252.80px;top:314px;color:#1c1c1c;letter-spacing:-0.046px;">Ctrl+Maj+P</span>
<span class="tx" style="left:33.50px;top:339px;color:#1c1c1c;letter-spacing:0.103px;">Snapping Options…</span>
<div style="left:33.50px;top:354px;width:10.00px;height:1px;background:#1c1c1c"></div>
<span class="tx" style="left:32.50px;top:364px;color:#1c1c1c;letter-spacing:0.570px;">Import/Export</span>
<span class="tx" style="left:32.50px;top:391px;color:#1c1c1c;letter-spacing:0.292px;">New Print Layout…</span>
<div style="left:67.84px;top:406px;width:10.00px;height:1px;background:#1c1c1c"></div>
<span class="tx" style="left:252.80px;top:391px;color:#1c1c1c;letter-spacing:-0.197px;">Ctrl+P</span>
<span class="tx" style="left:32.50px;top:416px;color:#1c1c1c;letter-spacing:0.350px;">New Report…</span>
<div style="left:68.08px;top:431px;width:10.83px;height:1px;background:#1c1c1c"></div>
<span class="tx" style="left:32.50px;top:441px;color:#1c1c1c;letter-spacing:0.135px;">Layout Manager…</span>
<span class="tx" style="left:32.50px;top:466px;color:#1c1c1c;letter-spacing:0.127px;">Layouts</span>
<span class="tx" style="left:32.50px;top:493px;color:#1c1c1c;letter-spacing:0.349px;">Models</span>
<span class="tx" style="left:32.50px;top:520px;color:#1c1c1c;letter-spacing:-0.397px;">Exit QGIS</span>
<span class="tx" style="left:252.80px;top:520px;color:#1c1c1c;letter-spacing:0.163px;">Ctrl+Q</span></body></html>
